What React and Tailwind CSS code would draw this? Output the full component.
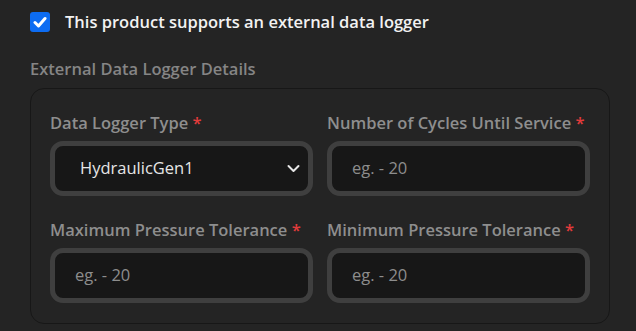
import React from "react";

const font = { fontFamily: '"Open Sans", "Noto Sans", Arial, sans-serif' };

function Label({ children }) {
  return (
    <div className="text-[16.5px] leading-[24px] font-semibold text-[#8e8e8e] whitespace-nowrap">
      {children} <span className="text-[#e23b3b]">*</span>
    </div>
  );
}

function Input() {
  return (
    <div className="h-[55px] rounded-[13px] border-[5px] border-[#3f3f3f] bg-[#171717] flex items-center pl-[20px] text-[16.5px] text-[#8d8d8d]">
      eg. - 20
    </div>
  );
}

function Select() {
  return (
    <div className="h-[55px] rounded-[13px] border-[5px] border-[#3f3f3f] bg-[#171717] flex items-center justify-between pl-[25px] pr-[8px] text-[16.5px] text-[#e6e6e6]">
      <span>HydraulicGen1</span>
      <svg width="13" height="9" viewBox="0 0 13 9" fill="none">
        <polyline points="1.5,2 6.5,7 11.5,2" stroke="#e6e6e6" strokeWidth="2" strokeLinecap="round" strokeLinejoin="round" />
      </svg>
    </div>
  );
}

export default function App() {
  return (
    <div style={font} className="w-[636px] h-[331px] bg-[#242424] overflow-hidden pl-[30px] pr-[26px] pt-[10px]">
      <div className="flex items-center gap-[15px] h-[24px]">
        <div className="w-[20px] h-[20px] rounded-[3px] bg-[#0d6cf2] flex items-center justify-center">
          <svg width="14" height="12" viewBox="0 0 14 12" fill="none">
            <polyline points="2,6.5 5.5,10 12,2.5" stroke="white" strokeWidth="3" strokeLinecap="round" strokeLinejoin="round" />
          </svg>
        </div>
        <div className="text-[16.5px] font-semibold text-[#f2f2f2] whitespace-nowrap">
          This product supports an external data logger
        </div>
      </div>
      <div className="mt-[23px] text-[16.5px] leading-[24px] font-semibold text-[#858585]">
        External Data Logger Details
      </div>
      <div className="mt-[7px] h-[236px] rounded-[14px] border border-[#171717] px-[19px] pt-[22px]">
        <div className="grid grid-cols-2 gap-x-[14px]">
          <div className="flex flex-col gap-[6px]">
            <Label>Data Logger Type</Label>
            <Select />
          </div>
          <div className="flex flex-col gap-[6px]">
            <Label>Number of Cycles Until Service</Label>
            <Input />
          </div>
          <div className="flex flex-col gap-[6px] mt-[22px]">
            <Label>Maximum Pressure Tolerance</Label>
            <Input />
          </div>
          <div className="flex flex-col gap-[6px] mt-[22px]">
            <Label>Minimum Pressure Tolerance</Label>
            <Input />
          </div>
        </div>
      </div>
    </div>
  );
}
